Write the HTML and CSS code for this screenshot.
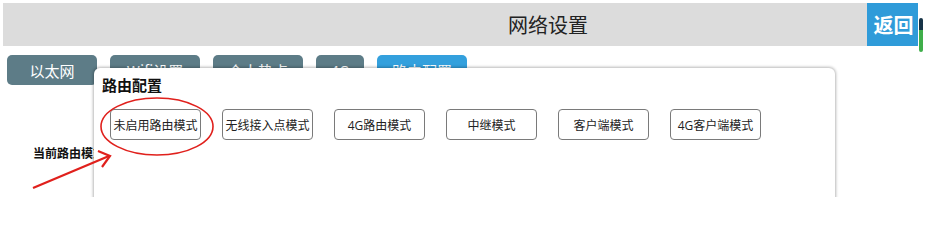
FILE: index.html
```html
<!DOCTYPE html>
<html lang="zh">
<head>
<meta charset="utf-8">
<title>网络设置</title>
<link rel="stylesheet" href="styles.css">
</head>
<body>
<div class="page">
  <header class="header">
    <div class="header-bar"><span class="header-title">网络设置</span></div>
    <div class="back-btn">返回</div>
    <div class="signal"></div>
  </header>
  <nav class="tabs">
    <div class="tab">以太网</div>
    <div class="tab">Wifi设置</div>
    <div class="tab">个人热点</div>
    <div class="tab tab-small">4G</div>
    <div class="tab tab-active">路由配置</div>
  </nav>
  <div class="content">
    <div class="current-mode">当前路由模式</div>
  </div>
  <section class="panel">
    <h2 class="panel-title">路由配置</h2>
    <div class="mode-row">
      <button class="mode-btn">未启用路由模式</button>
      <button class="mode-btn">无线接入点模式</button>
      <button class="mode-btn">4G路由模式</button>
      <button class="mode-btn">中继模式</button>
      <button class="mode-btn">客户端模式</button>
      <button class="mode-btn">4G客户端模式</button>
    </div>
  </section>
  <svg class="annot" width="929" height="205" viewBox="0 0 929 205">
    <ellipse cx="157" cy="126.5" rx="56" ry="28.5" fill="none" stroke="#e0201c" stroke-width="1.6"/>
    <path d="M33 188 L109 156" fill="none" stroke="#e0201c" stroke-width="2.2"/>
    <path d="M98 151 L110 156 L102 167" fill="none" stroke="#e0201c" stroke-width="2.2" stroke-linejoin="miter"/>
  </svg>
</div>
</body>
</html>
```
FILE: styles.css
```css
* { box-sizing: border-box; }
html, body { margin: 0; padding: 0; background: #fff; }
body {
  font-family: "Open Sans", "Noto Sans CJK SC", sans-serif;
  color: #222;
}
.page {
  position: relative;
  width: 929px;
  height: 205px;
  overflow: hidden;
}
.header {
  display: flex;
  align-items: flex-start;
  margin: 3px 0 0 3px;
  height: 43px;
}
.header-bar {
  width: 864px;
  height: 43px;
  background: #dcdcdc;
  display: flex;
  align-items: center;
  padding-left: 505px;
}
.header-title {
  font-family: "Noto Sans CJK SC", sans-serif;
  font-size: 20px;
  color: #222;
  line-height: 1;
}
.back-btn {
  width: 51px;
  height: 43px;
  background: #2f9bd9;
  color: #fff;
  font-family: "Noto Sans CJK SC", sans-serif;
  font-weight: 700;
  font-size: 20px;
  display: flex;
  align-items: center;
  justify-content: center;
  padding-left: 2px;
}
.signal {
  width: 4px;
  height: 34px;
  margin-top: 15px;
  margin-left: 1px;
  border-radius: 2px;
  background: linear-gradient(#173447 0 35%, #3fae4a 35% 100%);
}
.tabs {
  display: flex;
  gap: 13px;
  margin: 9px 0 0 7px;
}
.tab {
  width: 90px;
  height: 30px;
  border-radius: 5px;
  background: #5d7c87;
  color: #fff;
  font-family: "Noto Sans CJK SC", sans-serif;
  font-size: 15px;
  display: flex;
  align-items: center;
  justify-content: center;
}
.tab-small { width: 48px; }
.tab-active { background: #33a0dd; }
.content {
  padding: 61px 0 0 33px;
}
.current-mode {
  font-family: "Noto Sans CJK SC", sans-serif;
  font-weight: 700;
  font-size: 12px;
  line-height: 14px;
  color: #111;
}
.panel {
  position: absolute;
  left: 94px;
  top: 68px;
  width: 741px;
  height: 140px;
  background: #fff;
  border-radius: 6px;
  box-shadow: 0 0 3px 1px rgba(0,0,0,0.28);
  clip-path: inset(-6px -6px 11px -6px);
  padding: 8px 0 0 8px;
}
.panel-title {
  margin: 0;
  font-family: "Noto Sans CJK SC", sans-serif;
  font-weight: 700;
  font-size: 15px;
  line-height: 18px;
  color: #111;
}
.mode-row {
  display: flex;
  gap: 21px;
  margin: 15px 0 0 8px;
}
.mode-btn {
  width: 91px;
  height: 31px;
  padding: 0;
  background: #fff;
  border: 1px solid #7a7a7a;
  border-radius: 4px;
  font-family: "Open Sans", "Noto Sans CJK SC", sans-serif;
  font-size: 12px;
  color: #222;
  display: flex;
  align-items: center;
  justify-content: center;
}
.annot {
  position: absolute;
  left: 0;
  top: 0;
  pointer-events: none;
}
```
